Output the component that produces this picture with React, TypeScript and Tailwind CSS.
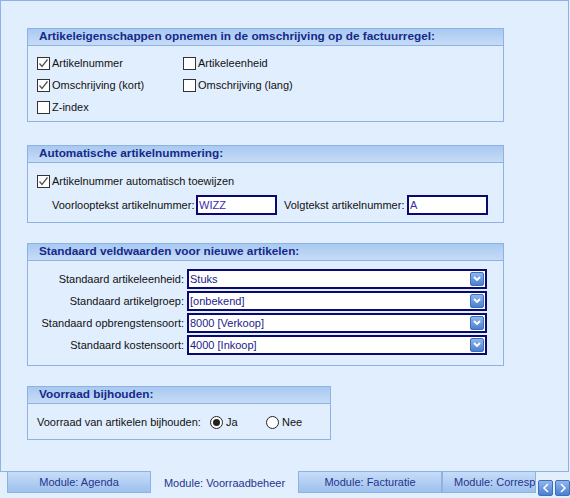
import React from "react";

const font = { fontFamily: '"Liberation Sans", Arial, sans-serif' };

function Check({ checked }: { checked?: boolean }) {
  return (
    <span className="w-[13px] h-[13px] border border-[#333333] bg-white flex items-center justify-center shrink-0">
      {checked && (
        <svg width="11" height="11" viewBox="0 0 11 11">
          <path d="M1.5 5.5 L4 8.5 L9.5 1.5" fill="none" stroke="#555" strokeWidth="1.3" />
        </svg>
      )}
    </span>
  );
}

function Radio({ checked }: { checked?: boolean }) {
  return (
    <span className="w-[13px] h-[13px] rounded-full border border-[#222] bg-white flex items-center justify-center shrink-0">
      {checked && <span className="w-[7px] h-[7px] rounded-full bg-[#222]" />}
    </span>
  );
}

function Group({ title, className, children }: { title: string; className?: string; children: React.ReactNode }) {
  return (
    <div className={"border border-[#8db2e3] bg-[#e1eefd] " + (className ?? "")}>
      <div className="h-[17px] border-b border-[#8db2e3] bg-[linear-gradient(to_bottom,#a9c9f1,#c6dcf6)] pl-[11px] flex items-center text-[11.8px] font-bold text-[#15298a] whitespace-nowrap">
        {title}
      </div>
      {children}
    </div>
  );
}

function Select({ value }: { value: string }) {
  return (
    <div className="w-[300px] h-[20px] border-2 border-[#0a0a6e] bg-white flex items-center justify-between pl-[1px] pr-[1px] text-[#1c1c8a]">
      <span>{value}</span>
      <span className="w-[14px] h-[14px] rounded-[2px] bg-[linear-gradient(to_bottom,#8fb6ec,#4a7fd0)] border border-[#3f6fba] flex items-center justify-center">
        <svg width="8" height="6" viewBox="0 0 8 6">
          <path d="M1 1 L4 4 L7 1" fill="none" stroke="white" strokeWidth="1.8" />
        </svg>
      </span>
    </div>
  );
}

function Tab({ label, active, w }: { label: string; active?: boolean; w: string }) {
  return (
    <div
      className={
        (active
          ? "bg-[#e1eefd] h-[24px] mt-[-1px] "
          : "bg-[linear-gradient(to_bottom,#c7ddf7,#9dc0ee)] h-[21px] border border-[#8db2e3] border-t-0 ") +
        w +
        " flex items-center justify-center text-[11px] text-[#24348e] overflow-hidden whitespace-nowrap shrink-0"
      }
    >
      {label}
    </div>
  );
}

export default function App() {
  return (
    <div className="w-[570px] h-[498px] bg-[#e4effc] text-[11px] text-[#111] whitespace-nowrap" style={font}>
      <div className="w-[569px] h-[472px] border border-[#8db2e3] bg-[#e1eefd] pl-[26px] pt-[27px] flex flex-col">
        <Group title="Artikeleigenschappen opnemen in de omschrijving op de factuurregel:" className="w-[477px] h-[94px]">
          <div className="pl-[9px] pt-[10px] grid grid-cols-[146px_1fr] gap-y-[8px]">
            <label className="flex items-center gap-[2px] h-[14px]"><Check checked /> Artikelnummer</label>
            <label className="flex items-center gap-[2px] h-[14px]"><Check /> Artikeleenheid</label>
            <label className="flex items-center gap-[2px] h-[14px]"><Check checked /> Omschrijving (kort)</label>
            <label className="flex items-center gap-[2px] h-[14px]"><Check /> Omschrijving (lang)</label>
            <label className="flex items-center gap-[2px] h-[14px]"><Check /> Z-index</label>
          </div>
        </Group>

        <Group title="Automatische artikelnummering:" className="w-[477px] h-[78px] mt-[23px]">
          <div className="pl-[9px] pt-[11px]">
            <label className="flex items-center gap-[2px] h-[14px]"><Check checked /> Artikelnummer automatisch toewijzen</label>
            <div className="flex items-center mt-[7px] pl-[15px]">
              <span className="w-[144px]">Voorlooptekst artikelnummer:</span>
              <div className="w-[81px] h-[20px] border-2 border-[#0a0a6e] bg-white pl-[1px] text-[#3a2fb0] flex items-center">WIZZ</div>
              <span className="ml-[7px] w-[123px]">Volgtekst artikelnummer:</span>
              <div className="w-[81px] h-[20px] border-2 border-[#0a0a6e] bg-white pl-[1px] text-[#3a2fb0] flex items-center">A</div>
            </div>
          </div>
        </Group>

        <Group title="Standaard veldwaarden voor nieuwe artikelen:" className="w-[477px] h-[123px] mt-[20px]">
          <div className="pt-[8px] flex flex-col gap-[2px]">
            {[
              ["Standaard artikeleenheid:", "Stuks"],
              ["Standaard artikelgroep:", "[onbekend]"],
              ["Standaard opbrengstensoort:", "8000 [Verkoop]"],
              ["Standaard kostensoort:", "4000 [Inkoop]"],
            ].map(([l, v]) => (
              <div key={l} className="flex items-center">
                <span className="w-[159px] text-right pr-[3px]">{l}</span>
                <Select value={v} />
              </div>
            ))}
          </div>
        </Group>

        <Group title="Voorraad bijhouden:" className="w-[304px] h-[54px] mt-[20px]">
          <div className="pl-[9px] pt-[10px] flex items-center">
            <span className="w-[173px]">Voorraad van artikelen bijhouden:</span>
            <label className="flex items-center gap-[3px] w-[56px]"><Radio checked /> Ja</label>
            <label className="flex items-center gap-[3px]"><Radio /> Nee</label>
          </div>
        </Group>
      </div>
      <div className="flex pl-[7px] items-start">
        <Tab label="Module: Agenda" w="w-[144px]" />
        <Tab label="Module: Voorraadbeheer" active w="w-[147px]" />
        <Tab label="Module: Facturatie" w="w-[144px]" />
        <div className="w-[94px] h-[21px] overflow-hidden whitespace-nowrap bg-[linear-gradient(to_bottom,#c7ddf7,#9dc0ee)] border border-[#8db2e3] border-t-0 text-[11px] text-[#24348e] flex items-center pl-[11px]">
          Module: Corresp
        </div>
        <div className="flex gap-[2px] mt-[8px] ml-[2px]">
          {["M6 1 L2 5 L6 9", "M2 1 L6 5 L2 9"].map((d) => (
            <span key={d} className="w-[15px] h-[16px] rounded-[2px] bg-[linear-gradient(to_bottom,#8fb6ec,#4a7fd0)] border border-[#3f6fba] flex items-center justify-center">
              <svg width="8" height="10" viewBox="0 0 8 10">
                <path d={d} fill="none" stroke="white" strokeWidth="1.6" />
              </svg>
            </span>
          ))}
        </div>
      </div>
    </div>
  );
}
